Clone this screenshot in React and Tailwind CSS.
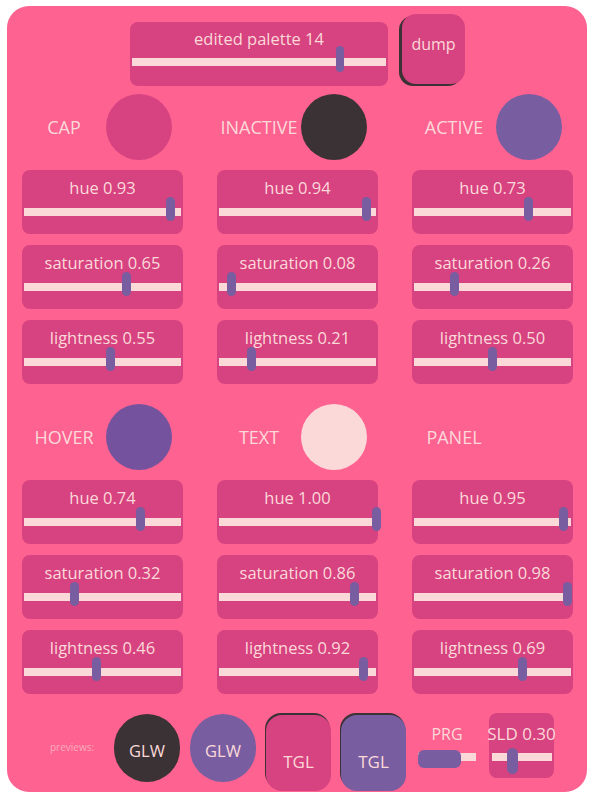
import React from "react";

const TEXT = "text-[#fcd9d9]";

function Slider({ label, value }) {
  return (
    <div className="h-[64px] rounded-[8px] bg-[#d74280] pt-[8px]">
      <div className={`h-[20px] text-center text-[16.5px] leading-[20px] whitespace-nowrap ${TEXT}`}>{label}</div>
      <div className="relative mx-[2px] mt-[10px] h-[8px] bg-[#fcd9d9]">
        <div
          className="absolute top-[-11px] h-[24px] w-[9px] rounded-full bg-[#785ea1]"
          style={{ left: value * 157 - 4.5 }}
        />
      </div>
    </div>
  );
}

function Group({ name, swatch, h, s, l }) {
  return (
    <div className="flex flex-col">
      <div className="flex h-[66px] items-center">
        <div className={`w-[84px] text-center text-[18px] ${TEXT}`}>{name}</div>
        <div className={`h-[66px] w-[66px] rounded-full ${swatch}`} />
      </div>
      <div className="mt-[10px] flex flex-col gap-[11px]">
        <Slider label={`hue ${h.toFixed(2)}`} value={h} />
        <Slider label={`saturation ${s.toFixed(2)}`} value={s} />
        <Slider label={`lightness ${l.toFixed(2)}`} value={l} />
      </div>
    </div>
  );
}

export default function App() {
  return (
    <div className="min-h-[800px] bg-white pl-[7px] pt-[6px] font-['Open_Sans',sans-serif]">
      <div className="h-[786px] w-[580px] rounded-[22px] bg-[#fd6291] pl-[15px] pr-[14px] pt-[8px]">
        {/* top row */}
        <div className="flex justify-center gap-[14px]">
          <div className="mt-[8px] h-[64px] w-[258px] rounded-[8px] bg-[#d74280] pt-[7px]">
            <div className={`h-[20px] text-center text-[16.5px] leading-[20px] ${TEXT}`}>edited palette 14</div>
            <div className="relative mx-[2px] mt-[9px] h-[8px] bg-[#fcd9d9]">
              <div
                className="absolute top-[-12px] h-[26px] w-[8px] rounded-full bg-[#785ea1]"
                style={{ left: 0.82 * 254 - 4 }}
              />
            </div>
          </div>
          <div
            className={`flex h-[70px] w-[63px] justify-center rounded-[14px] bg-[#d74280] pt-[19px] text-[16px] leading-[22px] shadow-[-3px_2px_0_#3b3235] ${TEXT}`}
          >
            dump
          </div>
        </div>

        {/* section 1 */}
        <div className="mt-[8px] grid grid-cols-[161px_161px_161px] gap-x-[34px]">
          <Group name="CAP" swatch="bg-[#d74280]" h={0.93} s={0.65} l={0.55} />
          <Group name="INACTIVE" swatch="bg-[#3b3235]" h={0.94} s={0.08} l={0.21} />
          <Group name="ACTIVE" swatch="bg-[#785ea1]" h={0.73} s={0.26} l={0.5} />
        </div>

        {/* section 2 */}
        <div className="mt-[20px] grid grid-cols-[161px_161px_161px] gap-x-[34px]">
          <Group name="HOVER" swatch="bg-[#75529d]" h={0.74} s={0.32} l={0.46} />
          <Group name="TEXT" swatch="bg-[#fcd9d9]" h={1.0} s={0.86} l={0.92} />
          <Group name="PANEL" swatch="bg-[#fd6291]" h={0.95} s={0.98} l={0.69} />
        </div>

        {/* previews row */}
        <div className="mt-[19px] flex items-start">
          <div className={`ml-[28px] mt-[27px] w-[64px] text-[10px] leading-[14px] opacity-60 ${TEXT}`}>previews:</div>
          <div
            className={`mt-[1px] flex h-[68px] w-[66px] items-center justify-center rounded-full bg-[#3b3235] pt-[6px] text-[16.5px] ${TEXT}`}
          >
            GLW
          </div>
          <div
            className={`ml-[10px] mt-[1px] flex h-[68px] w-[66px] items-center justify-center rounded-full bg-[#785ea1] pt-[6px] text-[16.5px] ${TEXT}`}
          >
            GLW
          </div>
          <div
            className={`ml-[10px] mt-[2px] flex h-[76px] w-[65px] items-center justify-center rounded-[16px] bg-[#d74280] pt-[18px] text-[17px] shadow-[-1px_-2px_0_#3b3235] ${TEXT}`}
          >
            TGL
          </div>
          <div
            className={`ml-[10px] mt-[2px] flex h-[76px] w-[65px] items-center justify-center rounded-[16px] bg-[#785ea1] pt-[18px] text-[17px] shadow-[-1px_-2px_0_#3b3235] ${TEXT}`}
          >
            TGL
          </div>
          <div className="ml-[12px] mt-[10px] w-[58px]">
            <div className={`h-[22px] text-center text-[16px] leading-[22px] ${TEXT}`}>PRG</div>
            <div className="relative mt-[8px] h-[8px] w-[58px] bg-[#fcd9d9]">
              <div className="absolute left-0 top-[-3px] h-[18px] w-[43px] rounded-[6px] bg-[#785ea1]" />
            </div>
          </div>
          <div className="ml-[13px] h-[65px] w-[65px] rounded-[8px] bg-[#d74280] pt-[10px]">
            <div className={`flex h-[22px] justify-center whitespace-nowrap text-[17px] leading-[22px] ${TEXT}`}>
              <span>SLD 0.30</span>
            </div>
            <div className="relative ml-[3px] mr-[2px] mt-[8px] h-[8px] bg-[#fcd9d9]">
              <div className="absolute left-[15px] top-[-5px] h-[26px] w-[11px] rounded-full bg-[#785ea1]" />
            </div>
          </div>
        </div>
      </div>
    </div>
  );
}
